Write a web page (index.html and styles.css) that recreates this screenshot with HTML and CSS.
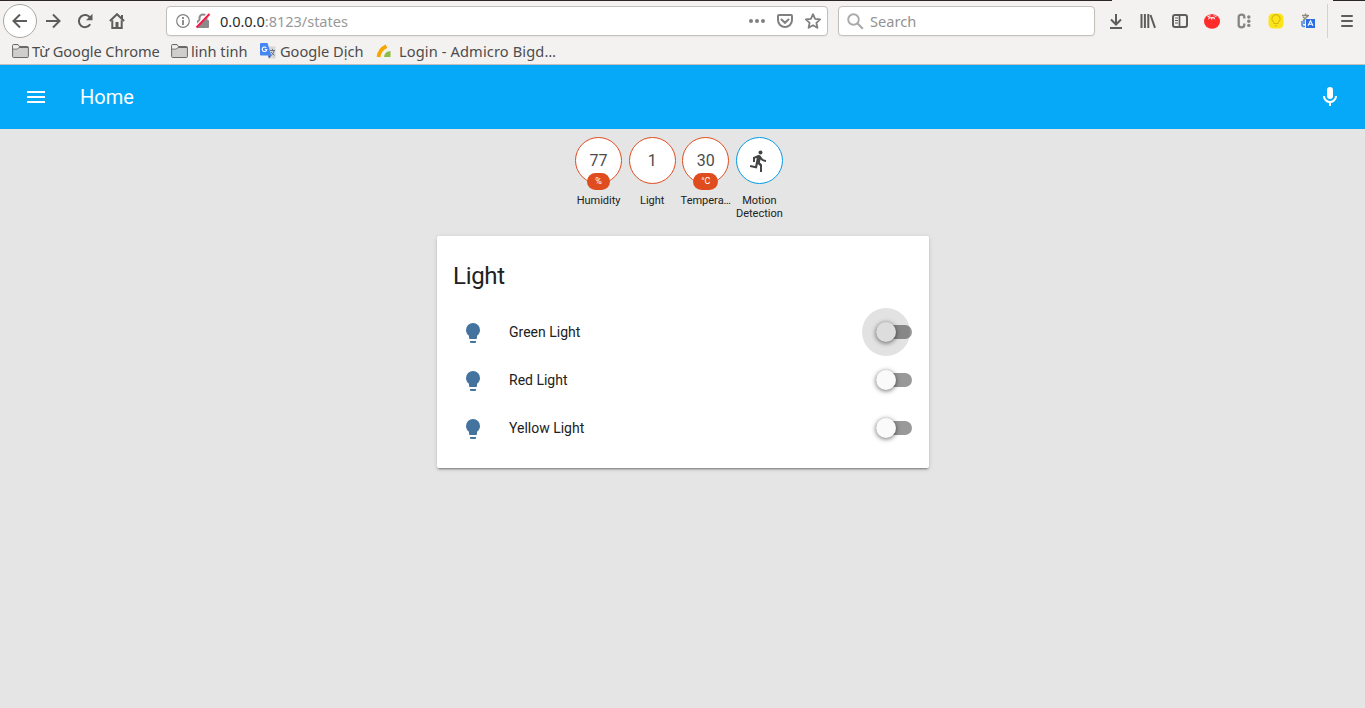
FILE: index.html
```html
<!DOCTYPE html>
<html lang="en">
<head>
<meta charset="utf-8">
<title>Home</title>
<link rel="stylesheet" href="styles.css">
</head>
<body>
<div class="browser">
  <div class="edge"><i class="edge-left"></i><i class="edge-right"></i></div>
  <div class="nav">
    <span class="back"><svg width="16" height="16" viewBox="0 0 16 16"><path d="M15 8H1.500M8 1.500L1.500 8 8 14.500" class="ln"/></svg></span>
    <span class="tool"><svg width="16" height="16" viewBox="0 0 16 16"><path d="M1 8h13.500M8 1.500L14.500 8 8 14.500" class="ln"/></svg></span>
    <span class="tool"><svg width="16" height="16" viewBox="0 0 16 16"><path d="M13.200 11.300A6.100 6.100 0 1 1 13.300 5" class="ln"/><path d="M15.500.800v6.500H9z" fill="#5d5d5c"/></svg></span>
    <span class="tool"><svg width="16" height="16" viewBox="0 0 16 16"><path d="M.900 8L8 1.200 15.100 8" class="ln"/><path d="M3.300 7.200V15h9.400V7.200M13 2v4" class="ln"/><path d="M6.500 9h3v6h-3z" fill="#5d5d5c"/></svg></span>
    <div class="url">
      <svg width="14" height="14" viewBox="0 0 14 14"><circle cx="7" cy="7" r="6.300" fill="none" stroke="#828282" stroke-width="1.200"/><path d="M7 3v2M7 6v5" stroke="#828282" stroke-width="1.800"/></svg>
      <svg class="lock" width="16" height="16" viewBox="0 0 16 16"><path d="M4.500 7V5a3.500 3.500 0 0 1 7 0v2" fill="none" stroke="#8a8a8a" stroke-width="2"/><rect x="2" y="7" width="12" height="8" rx="1" fill="#8a8a8a"/><path d="M.500 14L13.500.500" stroke="#fff" stroke-width="2.500"/><path d="M1.500 14.500L14.500 1" stroke="#f5194b" stroke-width="2"/></svg>
      <span class="address"><b>0.0.0.0</b>:8123/states</span>
      <span class="url-actions">
        <svg width="16" height="16" viewBox="0 0 16 16" fill="#808080"><circle cx="2" cy="8" r="2"/><circle cx="8" cy="8" r="2"/><circle cx="14" cy="8" r="2"/></svg>
        <svg width="16" height="16" viewBox="0 0 16 16" fill="none" stroke="#808080" stroke-width="2"><path d="M2 2h12q1 0 1 1v4a7 7 0 0 1-14 0V3q0-1 1-1z"/><path d="M4.500 6.500L8 9.800l3.500-3.300" stroke-linecap="round"/></svg>
        <svg width="16" height="16" viewBox="0 0 16 16"><path d="M8 1.200l2.100 4.600 5 .600-3.700 3.400 1 5L8 12.300l-4.400 2.500 1-5L.900 6.400l5-.600z" fill="none" stroke="#808080" stroke-width="1.800" stroke-linejoin="round"/></svg>
      </span>
    </div>
    <div class="search">
      <svg width="17" height="17" viewBox="0 0 17 17"><circle cx="6.500" cy="6.500" r="5.300" fill="none" stroke="#aaa" stroke-width="1.900"/><path d="M10.300 10.300l5.500 5.500" stroke="#aaa" stroke-width="2.200"/></svg>
      <span>Search</span>
    </div>
    <div class="addons">
      <span class="tool"><svg width="16" height="16" viewBox="0 0 16 16"><path d="M8 1v10M3 6.500l5 5 5-5M2 15h12" class="ln"/></svg></span>
      <span class="tool"><svg width="16" height="16" viewBox="0 0 16 16"><path d="M1.500 1v14M4.900 1v14M8.300 1v14M10.500 2l4.500 12.800" class="ln"/></svg></span>
      <span class="tool"><svg width="16" height="16" viewBox="0 0 16 16"><rect x="1" y="2" width="14" height="12" rx="2" class="ln"/><path d="M7.500 2v12" class="ln thin"/><path d="M3 5h3M3 7.500h3M3 10h3" stroke="#5d5d5c"/></svg></span>
      <span class="tool"><svg width="16" height="16" viewBox="0 0 16 16"><ellipse cx="8" cy="8.500" rx="8" ry="7.300" fill="#ff2b2b"/><path d="M3 3.500q3-2 5-.200Q10.500 1.500 13 3.500l-2.500.500.800 2.500L8.500 5 8 7.500 6.500 5 4 6.800l.800-2.600z" fill="#f3f2f1"/><path d="M5.500 3.800L8 3.500l3 .300M8 1v2" stroke="#ff2b2b"/></svg></span>
      <span class="tool"><svg width="16" height="16" viewBox="0 0 16 16"><path d="M8.300 5.500V4q0-2.300-2.800-2.300T2.700 4v8q0 2.300 2.800 2.300T8.300 12v-1.500" fill="none" stroke="#858585" stroke-width="2.300"/><g fill="#858585"><circle cx="12.800" cy="4" r="1.700"/><circle cx="12.800" cy="8.200" r="1.700"/><circle cx="12.800" cy="12.400" r="1.700"/></g></svg></span>
      <span class="tool"><svg width="16" height="16" viewBox="0 0 16 16"><rect x=".500" y=".500" width="15" height="15" rx="4.500" fill="#fbe51a"/><path d="M6 10.500q0-1.300-.900-2.200a3.900 3.900 0 1 1 5.800 0q-.900.900-.900 2.200zM6.500 12.700h3" fill="none" stroke="#d6b90f" stroke-width="1.100"/></svg></span>
      <span class="tool"><svg width="16" height="16" viewBox="0 0 16 16"><path d="M2 2.500h7M5.500.500v2M8 3L3 7.500M3 4l4 3" stroke="#8b8878" stroke-width="1.300"/><path d="M2 8v4q0 1.500 3 1.500M4 7v4" stroke="#4d88dc" stroke-width="1.600" fill="none"/><path d="M6 6h9v9H6z" fill="#2d6fe2"/><path d="M8 12.800l2.500-5 2.500 5M9 11.200h3" stroke="#fff" stroke-width="1.100" fill="none"/></svg></span>
    </div>
    <i class="divider"></i>
    <span class="tool"><svg width="16" height="16" viewBox="0 0 16 16"><path d="M3 3h10M3 8h10M3 13h10" class="ln" stroke-linecap="round"/></svg></span>
  </div>
  <div class="bookmarks">
    <span class="mark m1"><svg width="17" height="16" viewBox="0 0 17 16"><path d="M.600 13.500V2.500q0-1 1-1H6l1.500 2h7.900q1 0 1 1v9q0 1-1 1H1.600q-1 0-1-1z" fill="#cfcecd" stroke="#696866"/><path d="M.600 6h4.500l2-1.500h9.300" fill="none" stroke="#696866"/><path d="M1.200 2.200h4.500l1.400 1.900-2 1.300H1.200z" fill="#f0efee"/></svg><span>Từ Google Chrome</span></span>
    <span class="mark m2"><svg width="17" height="16" viewBox="0 0 17 16"><path d="M.600 13.500V2.500q0-1 1-1H6l1.500 2h7.900q1 0 1 1v9q0 1-1 1H1.600q-1 0-1-1z" fill="#cfcecd" stroke="#696866"/><path d="M.600 6h4.500l2-1.500h9.300" fill="none" stroke="#696866"/><path d="M1.200 2.200h4.500l1.400 1.900-2 1.300H1.200z" fill="#f0efee"/></svg><span>linh tinh</span></span>
    <span class="mark m3"><svg width="16" height="16" viewBox="0 0 16 16"><path d="M6 3.500h9.500V15.500H9z" fill="#d5d5d5"/><path d="M1 0h6.500l3.800 12.500H1q-1 0-1-1V1q0-1 1-1z" fill="#4487f4"/><path d="M8 12.500h3.300L9 15.500z" fill="#3157b8"/><path d="M6.300 4.800A2.300 2.300 0 1 0 6.800 6.500H4.800" fill="none" stroke="#fff" stroke-width="1.100"/><path d="M10 7.500h5M12.500 6v1.500M14 8q-1 3.500-3 4.500M11 9l3.500 3.500" stroke="#687687" fill="none"/></svg><span>Google Dịch</span></span>
    <span class="mark m4"><svg width="16" height="16" viewBox="0 0 16 16"><path d="M2.500 14Q3.500 6.500 10.500 3.300" fill="none" stroke="#f7a600" stroke-width="3.800"/><path d="M8 14q.500-5.500 6.500-6v6z" fill="#8cbd45"/></svg><span>Login - Admicro Bigd…</span></span>
  </div>
</div>
<header class="appbar">
  <svg width="24" height="24" viewBox="0 0 24 24" fill="#fff"><path d="M3 18h18v-2H3v2zm0-5h18v-2H3v2zm0-7v2h18V6H3z"/></svg>
  <h1>Home</h1>
  <svg class="mic" width="24" height="24" viewBox="0 0 24 24" fill="#fff"><path d="M12 2a3 3 0 0 1 3 3v6a3 3 0 0 1-6 0V5a3 3 0 0 1 3-3m7 9c0 3.530-2.610 6.440-6 6.930V21h-2v-3.070c-3.390-.490-6-3.400-6-6.930h2a5 5 0 0 0 10 0h2z"/></svg>
</header>
<main>
  <div class="badges">
    <div class="badge"><div class="ring">77<em>%</em></div><p>Humidity</p></div>
    <div class="badge"><div class="ring">1</div><p>Light</p></div>
    <div class="badge"><div class="ring">30<em class="wide">°C</em></div><p>Tempera…</p></div>
    <div class="badge"><div class="ring blue"><svg width="24" height="24" viewBox="0 0 24 24" fill="#444"><path d="M13.490 5.480c1.100 0 2-.900 2-2s-.900-2-2-2-2 .900-2 2 .900 2 2 2zm-3.600 13.900l1-4.400 2.100 2v6h2v-7.500l-2.100-2 .600-3c1.300 1.500 3.300 2.500 5.500 2.500v-2c-1.900 0-3.500-1-4.300-2.400l-1-1.600c-.400-.600-1-1-1.700-1-.300 0-.500.100-.800.100l-5.200 2.200v4.700h2v-3.400l1.800-.700-1.600 8.100-4.900-1-.400 2 7 1.400z"/></svg></div><p>Motion Detection</p></div>
  </div>
  <section class="card">
    <h2>Light</h2>
    <div class="row"><svg class="bulb" width="24" height="24" viewBox="0 0 24 24"><path d="M12 2a7 7 0 0 0-7 7c0 2.380 1.190 4.470 3 5.740V17a1 1 0 0 0 1 1h6a1 1 0 0 0 1-1v-2.260c1.810-1.270 3-3.360 3-5.740a7 7 0 0 0-7-7M9 21a1 1 0 0 0 1 1h4a1 1 0 0 0 1-1v-1H9v1z"/></svg><span>Green Light</span><i class="toggle focus"></i></div>
    <div class="row"><svg class="bulb" width="24" height="24" viewBox="0 0 24 24"><path d="M12 2a7 7 0 0 0-7 7c0 2.380 1.190 4.470 3 5.740V17a1 1 0 0 0 1 1h6a1 1 0 0 0 1-1v-2.260c1.810-1.270 3-3.360 3-5.740a7 7 0 0 0-7-7M9 21a1 1 0 0 0 1 1h4a1 1 0 0 0 1-1v-1H9v1z"/></svg><span>Red Light</span><i class="toggle"></i></div>
    <div class="row"><svg class="bulb" width="24" height="24" viewBox="0 0 24 24"><path d="M12 2a7 7 0 0 0-7 7c0 2.380 1.190 4.470 3 5.740V17a1 1 0 0 0 1 1h6a1 1 0 0 0 1-1v-2.260c1.810-1.270 3-3.360 3-5.740a7 7 0 0 0-7-7M9 21a1 1 0 0 0 1 1h4a1 1 0 0 0 1-1v-1H9v1z"/></svg><span>Yellow Light</span><i class="toggle"></i></div>
  </section>
</main>
</body>
</html>
```
FILE: styles.css
```css
* { box-sizing: border-box; }
body { margin: 0; height: 708px; overflow: hidden; background: #e5e5e5; font-family: Roboto, sans-serif; color: #212121; }
svg { display: block; flex: none; }
h1, h2, p { margin: 0; font-weight: 400; }

.browser { height: 65px; background: #f4f2f1; border-bottom: 1px solid #c2bfbc; font: 14.6px/20px "Noto Sans", sans-serif; color: #4c4c4c; }
.edge { display: flex; justify-content: space-between; height: 1px; }
.edge i { background: #2c2629; }
.edge-left { width: 1112px; }
.edge-right { width: 32px; }
.nav { display: flex; align-items: center; height: 40px; padding-left: 3px; }
.ln { fill: none; stroke: #5d5d5c; stroke-width: 2; }
.thin { stroke-width: 1.7; }
.back { display: flex; align-items: center; justify-content: center; width: 34px; height: 34px; border: 1px solid #aaa8a6; border-radius: 50%; background: #fff; }
.tool { display: flex; align-items: center; justify-content: center; width: 32px; height: 32px; }
.url, .search { display: flex; align-items: center; height: 30px; background: #fff; border: 1px solid #c3bfbb; border-radius: 4px; box-shadow: 0 1px 2px rgba(0,0,0,.05); }
.url { width: 662px; margin-left: 33px; padding: 0 6px 0 9px; }
.lock { margin-left: 5px; }
.address { margin-left: 9px; color: #999; letter-spacing: -.05px; white-space: nowrap; }
.address b { font-weight: 400; color: #2b2b2b; }
.url-actions { display: flex; gap: 12px; margin-left: auto; }
.search { width: 257px; margin-left: 10px; padding-left: 8px; color: #929292; }
.search span { margin-left: 6px; }
.addons { display: flex; margin-left: 5px; }
.divider { width: 1px; height: 34px; margin: 0 3px; background: #d4d2d0; }
.bookmarks { display: flex; align-items: center; height: 20px; }
.mark { display: flex; align-items: center; white-space: nowrap; }
.mark span { margin-left: 3px; }
.m1 { width: 159px; margin-left: 12px; letter-spacing: -.07px; }
.m2 { width: 89px; }
.m3 { width: 116px; }
.m3 span { margin-left: 4px; }
.m4 { letter-spacing: .13px; }
.m4 span { margin-left: 7px; }

.appbar { display: flex; align-items: center; height: 64px; padding: 0 23px 0 24px; background: #05a9f7; }
.appbar h1 { margin-left: 32px; color: #fff; font-size: 20px; line-height: 24px; }
.mic { margin-left: auto; }

.badges { display: flex; justify-content: center; height: 107px; padding: 8px 7px 0 0; }
.badge { width: 53.6px; display: flex; flex-direction: column; align-items: center; }
.ring { position: relative; display: flex; align-items: center; justify-content: center; width: 47px; height: 47px; border: 1px solid #df4c1e; border-radius: 50%; background: #fff; color: #4c4c4c; font-size: 16px; }
.blue { border-color: #039be5; }
.ring em { position: absolute; left: 11px; bottom: -7px; width: 23px; height: 17px; border-radius: 9px; background: #df4c1e; color: #fff; font-size: 9px; line-height: 17px; font-style: normal; text-align: center; }
.ring .wide { left: 10px; width: 25px; }
.badge p { width: 51px; margin-top: 10px; font-size: 11px; line-height: 13px; text-align: center; }

.card { width: 492px; height: 232px; margin-left: 437px; padding: 20px 16px 0; background: #fff; border-radius: 2px; box-shadow: 0 2px 2px rgba(0,0,0,.14), 0 1px 5px rgba(0,0,0,.12), 0 3px 1px -2px rgba(0,0,0,.2); }
.card h2 { height: 52px; font-size: 24px; line-height: 40px; letter-spacing: -.3px; }
.row { display: flex; align-items: center; height: 48px; font-size: 14px; }
.bulb { margin: 2px 24px 0 8px; fill: #44739e; }
.toggle { position: relative; width: 36px; height: 14px; margin-left: auto; margin-right: 1px; border-radius: 8px; background: #999; }
.toggle::before { content: ""; position: absolute; left: 0; top: -3px; width: 20px; height: 20px; border-radius: 50%; background: #fafafa; box-shadow: 0 1px 5px rgba(0,0,0,.6); }
.focus::after { content: ""; position: absolute; left: -14px; top: -17px; width: 48px; height: 48px; border-radius: 50%; background: rgba(0,0,0,.115); }
```
